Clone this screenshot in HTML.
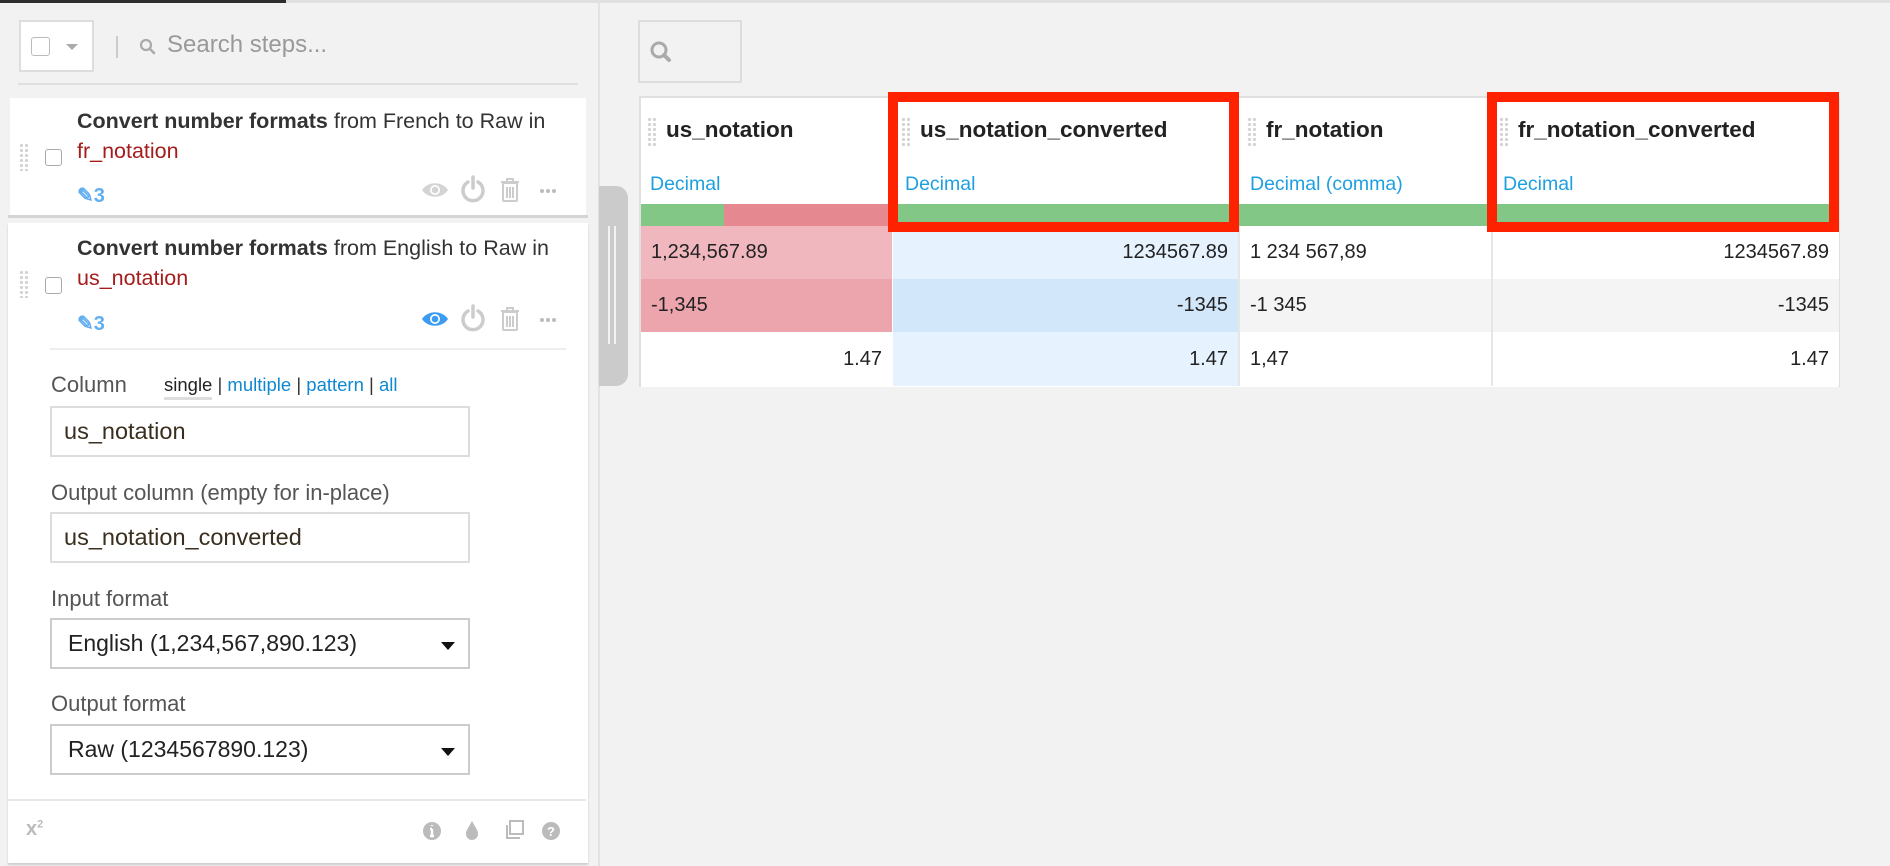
<!DOCTYPE html>
<html><head><meta charset="utf-8">
<style>
*{box-sizing:border-box;margin:0;padding:0}
body{width:1890px;height:866px;background:#f2f2f2;font-family:"Liberation Sans",sans-serif;position:relative;overflow:hidden;color:#333}
.a{position:absolute}
.t{white-space:nowrap}
.card{background:#fff}
.drag{width:9px;height:28px;background-image:radial-gradient(circle,#d4d4d4 1.6px,transparent 1.8px);background-size:5px 5px}
.cb{width:17px;height:17px;border:1.5px solid #aaa;border-radius:3px;background:#fff}
.lbl{font-size:22px;color:#555}
.inp{border:2px solid #ddd;background:#fff;font-size:23.5px;color:#3a2e1e;padding-left:12px;display:flex;align-items:center}
.sel{border:2px solid #ccc;background:#fff;font-size:23px;color:#222;padding-left:16px;display:flex;align-items:center}
.caret{position:absolute;right:13px;top:22px;border-left:7px solid transparent;border-right:7px solid transparent;border-top:8px solid #111}
.hd{font-size:22.5px;font-weight:bold;color:#222}
.dec{font-size:19.5px;color:#1ea0e0}
.cell{font-size:20px;color:#222;display:flex;align-items:center}
.r{justify-content:flex-end;padding-right:10px}
.l{padding-left:10px}
.red{border:10px solid #ff2200}
</style></head><body>
<div class="a" style="left:0;top:0;width:1890px;height:3px;background:#e0e0e0"></div>
<div class="a" style="left:0;top:0;width:286px;height:3px;background:#2e2e2e"></div>
<div class="a" style="left:598px;top:0;width:2px;height:866px;background:#e2e2e2"></div>
<div class="a" style="left:19px;top:20px;width:75px;height:52px;background:#fff;border:2px solid #ddd"></div>
<div class="a cb" style="left:31px;top:37px;width:19px;height:19px;border-color:#bbb"></div>
<div class="a" style="left:66px;top:44px;border-left:6px solid transparent;border-right:6px solid transparent;border-top:6px solid #aaa"></div>
<div class="a" style="left:116px;top:36px;width:2px;height:22px;background:#ccc"></div>
<svg class="a" style="left:139px;top:38px" width="18" height="18" viewBox="0 0 18 18"><circle cx="7" cy="7" r="5" fill="none" stroke="#aaa" stroke-width="2.2"/><path d="M11 11l4 4" stroke="#aaa" stroke-width="2.6" stroke-linecap="round"/></svg>
<div class="a t" style="left:167px;top:31px;font-size:24px;color:#999">Search steps...</div>
<div class="a" style="left:18px;top:83px;width:560px;height:2px;background:#e0e0e0"></div>
<!-- card 1 -->
<div class="a card" style="left:10px;top:98px;width:576px;height:117px"></div>
<div class="a" style="left:8px;top:215px;width:580px;height:3px;background:#d4d4d4"></div>
<div class="a drag" style="left:19px;top:143px"></div>
<div class="a cb" style="left:45px;top:149px"></div>
<div class="a t" style="left:77px;top:106px;font-size:21.5px;line-height:30px;color:#333"><b>Convert number formats</b> from French to Raw in<br><span style="color:#a61c1c">fr_notation</span></div>
<div class="a t" style="left:77px;top:183px;font-size:20px;font-weight:bold;color:#62aef0">✎3</div>
<!-- card 2 -->
<div class="a card" style="left:8px;top:223px;width:580px;height:640px;box-shadow:0 2px 2px #ccc"></div>
<div class="a drag" style="left:19px;top:270px"></div>
<div class="a cb" style="left:45px;top:277px"></div>
<div class="a t" style="left:77px;top:233px;font-size:21.5px;line-height:30px;color:#333"><b>Convert number formats</b> from English to Raw in<br><span style="color:#a61c1c">us_notation</span></div>
<div class="a t" style="left:77px;top:311px;font-size:20px;font-weight:bold;color:#62aef0">✎3</div>
<svg class="a" style="left:420px;top:175px" width="150" height="40" viewBox="0 0 150 40">
<g fill="#d4d4d4"><path d="M2 15c6-9 20-9 26 0c-6 9-20 9-26 0z"/><circle cx="15" cy="15" r="5" fill="#fff"/><circle cx="15" cy="15" r="3.3"/></g>
<g fill="none" stroke="#ccc" stroke-width="3.5" stroke-linecap="round"><path d="M48 7a10 10 0 1 0 10 0"/><path d="M53 2v11"/></g>
<g fill="none" stroke="#ccc" stroke-width="2"><rect x="83" y="8" width="14" height="18" rx="1"/><path d="M81 7h18M87 7V4h6v3M87 12v11M90 12v11M93 12v11"/></g>
<g fill="#bbb"><circle cx="122" cy="16" r="2"/><circle cx="128" cy="16" r="2"/><circle cx="134" cy="16" r="2"/></g>
</svg>
<svg class="a" style="left:420px;top:304px" width="150" height="40" viewBox="0 0 150 40">
<g fill="#3b9cf2"><path d="M2 15c6-9 20-9 26 0c-6 9-20 9-26 0z"/><circle cx="15" cy="15" r="5" fill="#fff"/><circle cx="15" cy="15" r="3.3"/></g>
<g fill="none" stroke="#ccc" stroke-width="3.5" stroke-linecap="round"><path d="M48 7a10 10 0 1 0 10 0"/><path d="M53 2v11"/></g>
<g fill="none" stroke="#ccc" stroke-width="2"><rect x="83" y="8" width="14" height="18" rx="1"/><path d="M81 7h18M87 7V4h6v3M87 12v11M90 12v11M93 12v11"/></g>
<g fill="#bbb"><circle cx="122" cy="16" r="2"/><circle cx="128" cy="16" r="2"/><circle cx="134" cy="16" r="2"/></g>
</svg>
<div class="a" style="left:50px;top:348px;width:516px;height:2px;background:#eee"></div>
<!-- form -->
<div class="a t lbl" style="left:51px;top:372px">Column</div>
<div class="a t" style="left:164px;top:374px;font-size:18.5px;color:#0f88d2"><span style="color:#222;border-bottom:3px solid #ddd;padding-bottom:2px">single</span> <span style="color:#333">|</span> multiple <span style="color:#333">|</span> pattern <span style="color:#333">|</span> all</div>
<div class="a inp" style="left:50px;top:406px;width:420px;height:51px">us_notation</div>
<div class="a t lbl" style="left:51px;top:480px">Output column (empty for in-place)</div>
<div class="a inp" style="left:50px;top:512px;width:420px;height:51px">us_notation_converted</div>
<div class="a t lbl" style="left:51px;top:586px">Input format</div>
<div class="a sel" style="left:50px;top:618px;width:420px;height:51px">English (1,234,567,890.123)<div class="caret"></div></div>
<div class="a t lbl" style="left:51px;top:691px">Output format</div>
<div class="a sel" style="left:50px;top:724px;width:420px;height:51px">Raw (1234567890.123)<div class="caret"></div></div>
<div class="a" style="left:8px;top:799px;width:578px;height:2px;background:#e8e8e8"></div>
<div class="a t" style="left:26px;top:818px;font-size:20px;color:#bbb;font-weight:bold">x<sup style="font-size:11px">2</sup></div>
<svg class="a" style="left:420px;top:815px" width="150" height="32" viewBox="0 0 150 32">
<circle cx="12" cy="16" r="9" fill="#bbb"/><path d="M12 10v1M12 14v7M10 21h4M10 14h2" stroke="#fff" stroke-width="2.4"/>
<path d="M52 6c-3 6-6 9-6 13a6 6 0 0 0 12 0c0-4-3-7-6-13z" fill="#bbb"/>
<rect x="90" y="6" width="13" height="13" fill="none" stroke="#bbb" stroke-width="2"/><path d="M87 10v13h13" fill="none" stroke="#bbb" stroke-width="2"/>
<circle cx="131" cy="16" r="9" fill="#bbb"/><text x="131" y="21" font-size="13" font-weight="bold" fill="#fff" text-anchor="middle" font-family="Liberation Sans">?</text>
</svg>
<!-- scroll handle -->
<div class="a" style="left:599px;top:186px;width:29px;height:200px;background:#cbcbcb;border-radius:0 12px 12px 0"></div>
<div class="a" style="left:608px;top:226px;width:2px;height:118px;background:#f2f2f2"></div>
<div class="a" style="left:614px;top:226px;width:2px;height:118px;background:#f2f2f2"></div>
<!-- right search -->
<div class="a" style="left:638px;top:20px;width:104px;height:63px;border:2px solid #ddd"></div>
<svg class="a" style="left:649px;top:40px" width="24" height="24" viewBox="0 0 24 24"><circle cx="10" cy="10" r="7" fill="none" stroke="#aaa" stroke-width="3"/><path d="M15 15l5 5" stroke="#aaa" stroke-width="4" stroke-linecap="round"/></svg>
<!-- table -->
<div class="a" style="left:639px;top:96px;width:1201px;height:291px;background:#fff;border:2px solid #e0e0e0;border-bottom:none"></div>
<div class="a drag" style="left:647px;top:117px;height:30px"></div>
<div class="a t hd" style="left:666px;top:117px">us_notation</div>
<div class="a t dec" style="left:650px;top:173px">Decimal</div>
<div class="a drag" style="left:901px;top:117px;height:30px"></div>
<div class="a t hd" style="left:920px;top:117px">us_notation_converted</div>
<div class="a t dec" style="left:905px;top:173px">Decimal</div>
<div class="a drag" style="left:1247px;top:117px;height:30px"></div>
<div class="a t hd" style="left:1266px;top:117px">fr_notation</div>
<div class="a t dec" style="left:1250px;top:173px">Decimal (comma)</div>
<div class="a drag" style="left:1499px;top:117px;height:30px"></div>
<div class="a t hd" style="left:1518px;top:117px">fr_notation_converted</div>
<div class="a t dec" style="left:1503px;top:173px">Decimal</div>
<div class="a" style="left:641px;top:204px;width:1198px;height:22px;background:#82c785"></div>
<div class="a" style="left:724px;top:204px;width:168px;height:22px;background:#e5888f"></div>
<div class="a cell l" style="left:641px;top:226px;width:251px;height:53px;background:#f0b8be">1,234,567.89</div>
<div class="a cell l" style="left:641px;top:279px;width:251px;height:53px;background:#eda5ad">-1,345</div>
<div class="a cell r" style="left:641px;top:332px;width:251px;height:54px;background:#fff">1.47</div>
<div class="a cell r" style="left:893px;top:226px;width:345px;height:53px;background:#e6f2fd">1234567.89</div>
<div class="a cell r" style="left:893px;top:279px;width:345px;height:53px;background:#d3e7fb">-1345</div>
<div class="a cell r" style="left:893px;top:332px;width:345px;height:54px;background:#e6f2fd">1.47</div>
<div class="a" style="left:1238px;top:226px;width:2px;height:160px;background:#e6e6e6"></div>
<div class="a cell l" style="left:1240px;top:226px;width:251px;height:53px;background:#fff">1 234 567,89</div>
<div class="a cell l" style="left:1240px;top:279px;width:251px;height:53px;background:#f4f4f4">-1 345</div>
<div class="a cell l" style="left:1240px;top:332px;width:251px;height:54px;background:#fff">1,47</div>
<div class="a" style="left:1491px;top:226px;width:2px;height:160px;background:#e6e6e6"></div>
<div class="a cell r" style="left:1493px;top:226px;width:346px;height:53px;background:#fff">1234567.89</div>
<div class="a cell r" style="left:1493px;top:279px;width:346px;height:53px;background:#f4f4f4">-1345</div>
<div class="a cell r" style="left:1493px;top:332px;width:346px;height:54px;background:#fff">1.47</div>
<div class="a red" style="left:888px;top:92px;width:351px;height:140px"></div>
<div class="a red" style="left:1487px;top:92px;width:352px;height:140px"></div>
</body></html>
